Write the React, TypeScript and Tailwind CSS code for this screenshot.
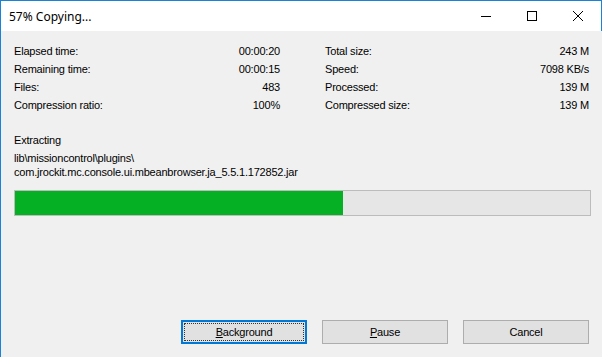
export default function App() {
  const left = [
    ["Elapsed time:", "00:00:20"],
    ["Remaining time:", "00:00:15"],
    ["Files:", "483"],
    ["Compression ratio:", "100%"],
  ]
  const right = [
    ["Total size:", "243 M"],
    ["Speed:", "7098 KB/s"],
    ["Processed:", "139 M"],
    ["Compressed size:", "139 M"],
  ]

  return (
    <div
      className="w-[602px] h-[357px] flex flex-col bg-[#f0f0f0] border-l border-t border-[#1883d7] text-[#000] text-[11px] tracking-[-0.2px] overflow-hidden"
      style={{ fontFamily: '"Liberation Sans", Arial, sans-serif' }}
    >
      {/* Title bar */}
      <div className="h-[30px] flex items-center bg-white border-r border-[#1883d7] shrink-0">
        <div className="pl-[8px] text-[12px] tracking-normal flex-1 pt-[1px]" style={{ fontFamily: '"Noto Sans", "Liberation Sans", sans-serif' }}>
          57% Copying...
        </div>
        <div className="w-[46px] h-full flex items-center justify-center">
          <svg width="10" height="10" viewBox="0 0 10 10">
            <path d="M0 5.5h10" stroke="#000" strokeWidth="1" />
          </svg>
        </div>
        <div className="w-[46px] h-full flex items-center justify-center">
          <svg width="10" height="10" viewBox="0 0 10 10">
            <rect x="0.5" y="0.5" width="9" height="9" fill="none" stroke="#000" strokeWidth="1" />
          </svg>
        </div>
        <div className="w-[46px] h-full flex items-center justify-center">
          <svg width="10" height="10" viewBox="0 0 10 10">
            <path d="M0 0L10 10M10 0L0 10" stroke="#000" strokeWidth="1" />
          </svg>
        </div>
      </div>

      {/* Body */}
      <div className="flex-1 flex flex-col px-[13px] pt-[11px]">
        <div className="flex">
          <div className="w-[266px] flex flex-col">
            {left.map(([k, v]) => (
              <div key={k} className="h-[18px] flex items-center justify-between">
                <span>{k}</span>
                <span>{v}</span>
              </div>
            ))}
          </div>
          <div className="w-[45px]" />
          <div className="w-[264px] flex flex-col">
            {right.map(([k, v]) => (
              <div key={k} className="h-[18px] flex items-center justify-between">
                <span>{k}</span>
                <span>{v}</span>
              </div>
            ))}
          </div>
        </div>

        <div className="mt-[19px] leading-[14px]">Extracting</div>
        <div className="mt-[4px] leading-[14px]">
          lib\missioncontrol\plugins\
          <br />
          com.jrockit.mc.console.ui.mbeanbrowser.ja_5.5.1.172852.jar
        </div>

        <div className="mt-[11px] w-[577px] h-[26px] border border-[#bcbcbc] bg-[#e6e6e6] flex">
          <div className="bg-[#06b025] h-full" style={{ width: "57%" }} />
        </div>

        <div className="flex-1" />

        <div className="flex justify-end gap-[15px] pb-[13px]">
          <button className="w-[126px] h-[24px] bg-[#e1e1e1] border-2 border-[#0078d7] flex items-center justify-center p-[1px]">
            <span className="w-full h-full border border-dotted border-[#333] flex items-center justify-center">
              <span><u>B</u>ackground</span>
            </span>
          </button>
          <button className="w-[126px] h-[24px] bg-[#e1e1e1] border border-[#adadad] flex items-center justify-center">
            <span><u>P</u>ause</span>
          </button>
          <button className="w-[126px] h-[24px] bg-[#e1e1e1] border border-[#adadad] flex items-center justify-center">
            <span>Cancel</span>
          </button>
        </div>
      </div>
    </div>
  )
}
